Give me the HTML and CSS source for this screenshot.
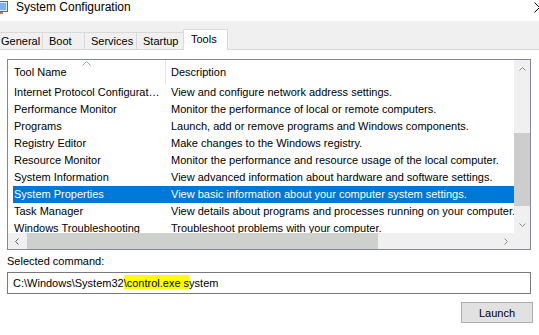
FILE: index.html
```html
<!DOCTYPE html>
<html lang="en">
  <head>
    <meta charset="utf-8" />
    <title>System Configuration</title>
    <link rel="stylesheet" href="styles.css">
  </head>
  <body>
    <div class="window">
      <header class="titlebar">
        <svg class="app-icon" width="16" height="14" viewBox="0 0 16 14">
          <rect x="0.5" y="0.5" width="15" height="10" fill="#dfe9f5" stroke="#3b6fb0" />
          <rect x="2" y="2" width="12" height="7" fill="#7fb2e6" />
          <rect x="5" y="11" width="6" height="2" fill="#8a8a8a" />
        </svg>
        <span class="title">System Configuration</span>
        <svg class="close" width="11" height="11" viewBox="0 0 11 11">
          <path d="M0.5 0.5 L10.5 10.5 M0.5 10.5 L10.5 0.5" stroke="#000" stroke-width="1" fill="none" />
        </svg>
      </header>

      <nav class="tabs">
        <div class="tab tab-general">General</div>
        <div class="tab tab-boot">Boot</div>
        <div class="tab tab-services">Services</div>
        <div class="tab tab-startup">Startup</div>
        <div class="tab tab-tools active">Tools</div>
      </nav>

      <section class="page">
        <div class="listview">
          <div class="list">
            <div class="list-head">
              <div class="head-cell head-name">
                Tool Name
                <svg class="sort" width="9" height="5" viewBox="0 0 9 5">
                  <path d="M0.5 4.5 L4.5 0.5 L8.5 4.5" stroke="#9aa4b0" fill="none" />
                </svg>
              </div>
              <div class="head-cell head-desc">Description</div>
            </div>
            <div class="row"><span class="cell-name">Internet Protocol Configurat…</span><span class="cell-desc">View and configure network address settings.</span></div>
            <div class="row"><span class="cell-name">Performance Monitor</span><span class="cell-desc">Monitor the performance of local or remote computers.</span></div>
            <div class="row"><span class="cell-name">Programs</span><span class="cell-desc">Launch, add or remove programs and Windows components.</span></div>
            <div class="row"><span class="cell-name">Registry Editor</span><span class="cell-desc">Make changes to the Windows registry.</span></div>
            <div class="row"><span class="cell-name">Resource Monitor</span><span class="cell-desc">Monitor the performance and resource usage of the local computer.</span></div>
            <div class="row"><span class="cell-name">System Information</span><span class="cell-desc">View advanced information about hardware and software settings.</span></div>
            <div class="row selected"><span class="cell-name">System Properties</span><span class="cell-desc">View basic information about your computer system settings.</span></div>
            <div class="row"><span class="cell-name">Task Manager</span><span class="cell-desc">View details about programs and processes running on your computer.</span></div>
            <div class="row"><span class="cell-name">Windows Troubleshooting</span><span class="cell-desc">Troubleshoot problems with your computer.</span></div>
          </div>

          <div class="vscroll">
            <div class="sb-btn">
              <svg width="7" height="4" viewBox="0 0 7 4"><path d="M0.5 3.5 L3.5 0.5 L6.5 3.5" stroke="#8a8a8a" fill="none" /></svg>
            </div>
            <div class="vtrack"><div class="vthumb"></div></div>
            <div class="sb-btn">
              <svg width="7" height="4" viewBox="0 0 7 4"><path d="M0.5 0.5 L3.5 3.5 L6.5 0.5" stroke="#8a8a8a" fill="none" /></svg>
            </div>
          </div>

          <div class="hscroll">
            <div class="sb-btn">
              <svg width="4" height="7" viewBox="0 0 4 7"><path d="M3.5 0.5 L0.5 3.5 L3.5 6.5" stroke="#606060" fill="none" /></svg>
            </div>
            <div class="htrack"><div class="hthumb"></div></div>
            <div class="sb-btn">
              <svg width="4" height="7" viewBox="0 0 4 7"><path d="M0.5 0.5 L3.5 3.5 L0.5 6.5" stroke="#8a8a8a" fill="none" /></svg>
            </div>
          </div>

          <div class="corner"></div>
        </div>

        <div class="cmd-label">Selected command:</div>
        <div class="cmd-box">C:\Windows\System32<mark class="hl">\control.exe s</mark>ystem</div>

        <div class="actions">
          <button class="btn">Launch</button>
        </div>
      </section>
    </div>
  </body>
</html>
```

FILE: styles.css
```css
html, body {
  margin: 0;
  background: #fff;
}

body {
  font-family: "Liberation Sans", Arial, sans-serif;
  font-size: 11px;
  color: #000;
  overflow: hidden;
}

.window {
  width: 539px;
  height: 335px;
  overflow: hidden;
}

/* title bar */
.titlebar {
  position: relative;
  display: flex;
  align-items: flex-start;
  height: 21px;
  background: #fff;
}

.app-icon {
  margin: 0 0 0 -8px;
  padding-top: 1px;
}

.title {
  margin-left: 8px;
  font-size: 12px;
  line-height: 15px;
}

.close {
  position: absolute;
  right: -6px;
  top: 2px;
}

/* tab strip */
.tabs {
  display: flex;
  align-items: flex-end;
  height: 28px;
  background: #f0f0f0;
  border-bottom: 1px solid #d9d9d9;
}

.tab {
  box-sizing: border-box;
  flex: none;
  height: 17px;
  line-height: 16px;
  padding: 0 0 0 6px;
  border: 1px solid #d9d9d9;
  border-bottom: none;
  margin-left: -1px;
  background: #f0f0f0;
  white-space: nowrap;
}

.tab-general  { width: 49px; margin-left: -6px; }
.tab-boot     { width: 43px; }
.tab-services { width: 53px; }
.tab-startup  { width: 48px; }

.tab.active {
  position: relative;
  z-index: 1;
  width: 45px;
  height: 21px;
  padding: 1px 0 0 7px;
  margin: 0 0 -1px -1px;
  background: #fff;
}

/* tab page */
.page {
  padding: 9px 8px 0 7px;
}

.listview {
  display: grid;
  grid-template-columns: 1fr 16px;
  grid-template-rows: 1fr 16px;
  height: 189px;
  border: 1px solid #828790;
}

.list {
  overflow: hidden;
  min-width: 0;
}

.list-head {
  display: flex;
  height: 24px;
  line-height: 24px;
}

.head-cell {
  position: relative;
  white-space: nowrap;
}

.head-name {
  width: 151px;
  padding-left: 6px;
  border-right: 1px solid #e5e5e5;
}

.head-desc {
  padding-left: 5px;
}

.sort {
  position: absolute;
  left: 74px;
  top: 1px;
}

.row {
  display: grid;
  grid-template-columns: 156px 1fr;
  height: 17px;
  line-height: 17px;
  margin-left: 5px;
  white-space: nowrap;
}

.cell-name {
  padding-left: 1px;
  overflow: hidden;
}

.cell-desc {
  padding-left: 2px;
  overflow: hidden;
}

.row.selected {
  background: #0078d7;
  color: #fff;
}

/* scrollbars */
.sb-btn {
  display: flex;
  align-items: center;
  justify-content: center;
}

.vscroll {
  display: grid;
  grid-template-rows: 17px 1fr 17px;
  background: #f0f0f0;
}

.vtrack {
  padding-top: 56px;
}

.vthumb {
  height: 73px;
  background: #cdcdcd;
}

.hscroll {
  display: grid;
  grid-template-columns: 17px 1fr 17px;
  background: #f0f0f0;
}

.htrack {
  padding-left: 2px;
}

.hthumb {
  width: 351px;
  height: 100%;
  background: #cdd0cd;
}

.corner {
  background: #f0f0f0;
}

/* command line */
.cmd-label {
  margin-top: 5px;
  line-height: 13px;
}

.cmd-box {
  margin-top: 4px;
  height: 20px;
  line-height: 20px;
  padding-left: 5px;
  border: 1px solid #7a7a7a;
  white-space: nowrap;
}

.hl {
  background: #ffff00;
  color: #000;
  padding-top: 2px;
}

.actions {
  display: flex;
  justify-content: flex-end;
  margin-top: 8px;
  margin-right: -2px;
}

.btn {
  width: 72px;
  height: 21px;
  padding: 0;
  font-family: inherit;
  font-size: 11px;
  color: #000;
  background: #e1e1e1;
  border: 1px solid #adadad;
  border-radius: 0;
}
```
